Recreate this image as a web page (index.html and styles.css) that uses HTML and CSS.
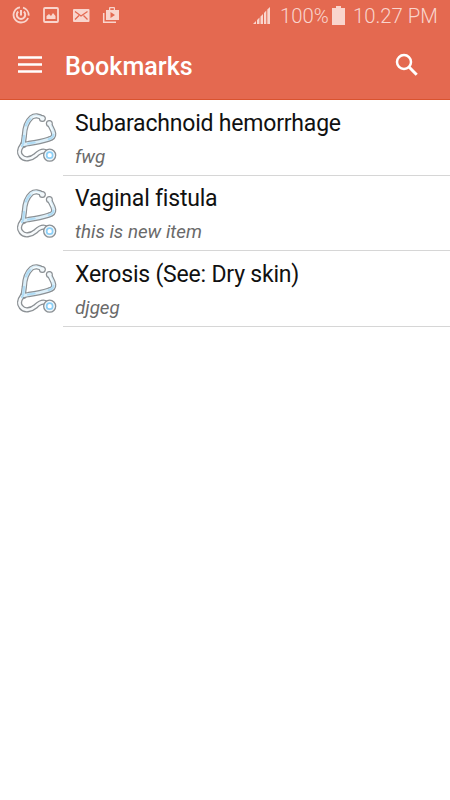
FILE: index.html
```html
<!DOCTYPE html>
<html lang="en">
<head>
<meta charset="utf-8">
<title>Bookmarks</title>
<link rel="stylesheet" href="styles.css">
</head>
<body>
<svg width="0" height="0" class="defs" aria-hidden="true">
  <symbol id="stethoscope" viewBox="24 15 132 159">
    <g fill="none" stroke-linecap="round" stroke-linejoin="round">
      <g stroke="#8b9094" stroke-width="16">
        <path d="M43 118C34 130 32 143 39 151C49 165 69 161 83 149C93 140 104 132 115 140"/>
        <path d="M104 39C94 29 79 29 70 36C54 50 50 68 49 91L46 113M124 54C128 64 136 75 137 84C138 95 132 98 122 101C104 107 84 111 62 114L48 117"/>
      </g>
      <g fill="#8b9094">
        <circle cx="103" cy="39" r="10.5"/>
        <circle cx="124" cy="54" r="10.5"/>
        <circle cx="46" cy="118" r="10"/>
      </g>
      <path stroke="#f7fafc" stroke-width="8" d="M43 118C34 130 32 143 39 151C49 165 69 161 83 149C93 140 104 132 115 140"/>
      <path stroke="#dceff9" stroke-width="9" d="M104 39C94 29 79 29 70 36C54 50 50 68 49 91L46 113M124 54C128 64 136 75 137 84C138 95 132 98 122 101C104 107 84 111 62 114L48 117"/>
      <path stroke="#b0dcf5" stroke-width="6.5" d="M54 60Q58 48 66 41M48 91L46 113L42 122M60 114L80 111M136 88Q136 97 122 101"/>
      <path stroke="#f8fcfd" stroke-width="4" d="M76 35Q87 29 98 37M125 59L132 74"/>
    </g>
    <g fill="#f2f8fb">
      <circle cx="103" cy="39" r="7"/>
      <circle cx="124" cy="54" r="7"/>
      <circle cx="125" cy="149" r="18" stroke="#8b9094" stroke-width="4"/>
    </g>
    <circle cx="125" cy="149" r="9" fill="#fff" stroke="#8bcff7" stroke-width="5"/>
  </symbol>
</svg>
<header class="header">
  <div class="status">
    <div class="notices">
      <svg class="notice" viewBox="0 0 18 18"><g fill="none" stroke="currentColor"><path stroke-width="1.8" d="M8 1.4A7.6 7.6 0 1 0 16.1 12M11 1.7A7.6 7.6 0 0 1 16.6 9.7"/><path stroke-width="2" d="M6.2 5.6A4.2 4.2 0 1 0 11.8 5.6M9 4V9.5"/></g></svg>
      <svg class="notice" viewBox="0 0 18 18"><rect x="2" y="2" width="14" height="14" rx="1" fill="none" stroke="currentColor" stroke-width="1.8"/><path fill="currentColor" d="M4.5 13V10L7 8L9 10L11 7L13.5 10V13Z"/></svg>
      <svg class="notice" viewBox="0 0 18 18"><rect x="1" y="3" width="16.5" height="13" rx="1" fill="currentColor"/><path d="M3 5.5L9 10L15.5 5.5M3 13.5L7 9.5M15.5 13.5L11.5 9.5" fill="none" stroke="#e46950" stroke-width="1.3"/></svg>
      <svg class="notice" viewBox="0 0 18 18"><path d="M1.7 7V16.2H14" fill="none" stroke="currentColor" stroke-width="1.5"/><path fill="currentColor" fill-rule="evenodd" d="M4 4H7V2Q7 1 8 1H12Q13 1 13 2V4H17V14H4ZM8.3 2.3V4H11.8V2.3ZM8.5 6V12L13 9Z"/></svg>
    </div>
    <svg class="signal" viewBox="0 0 18 18" fill="currentColor"><path d="M0 17L3 14V17ZM4 17V13L6.5 10.5V17ZM7.5 17V9.5L10 7V17ZM11 17V6L13.3 3.5V17ZM14.3 17V2.5L17 0V17Z"/></svg>
    <span class="level">100%</span>
    <svg class="battery" viewBox="0 0 13 19"><path fill="currentColor" d="M0 2H4V0H9V2H13V19H0Z"/></svg>
    <span class="clock">10.27 PM</span>
  </div>
  <div class="toolbar">
    <svg class="menu" viewBox="0 0 24 18"><path d="M0 1.5H24M0 8.5H24M0 15.5H24" stroke="#fff" stroke-width="2.5"/></svg>
    <h1 class="title">Bookmarks</h1>
    <svg class="search" viewBox="0 0 24 24"><circle cx="9" cy="9" r="7" fill="none" stroke="#fff" stroke-width="2.5"/><path d="M14 14L21.7 21.7" stroke="#fff" stroke-width="3"/></svg>
  </div>
</header>
<main class="list">
  <article class="row">
    <svg class="scope"><use href="#stethoscope"/></svg>
    <div class="text"><h2 class="name">Subarachnoid hemorrhage</h2><p class="note">fwg</p></div>
  </article>
  <article class="row">
    <svg class="scope"><use href="#stethoscope"/></svg>
    <div class="text"><h2 class="name">Vaginal fistula</h2><p class="note">this is new item</p></div>
  </article>
  <article class="row">
    <svg class="scope"><use href="#stethoscope"/></svg>
    <div class="text"><h2 class="name">Xerosis (See: Dry skin)</h2><p class="note">djgeg</p></div>
  </article>
</main>
</body>
</html>
```
FILE: styles.css
```css
* { box-sizing: border-box; }
body { margin: 0; background: #fff; font-family: Roboto, sans-serif; }
h1, h2, p { margin: 0; }
svg { display: block; flex: none; }
.defs { position: absolute; }
.header { height: 100px; background: #e46950; border-bottom: 1px solid #d9532f; color: #fff; }
.status { height: 31px; display: flex; align-items: center; padding: 0 12px; color: #f9d5cd; }
.notices { display: flex; gap: 12px; margin-right: auto; }
.notice { width: 18px; height: 18px; margin-top: -1px; }
.signal { width: 18px; height: 18px; margin-right: 9px; }
.level, .clock { font-size: 20.3px; font-weight: 300; line-height: 31px; white-space: nowrap; padding-top: 1px; }
.level { width: 49px; }
.battery { width: 13px; height: 19px; margin: 0 8px 1px 3px; }
.clock { width: 85px; }
.toolbar { height: 68px; display: flex; align-items: center; padding: 0 31px 0 18px; }
.menu { width: 24px; height: 18px; margin-right: 23px; }
.title { flex: 1; font-size: 25.1px; font-weight: 500; line-height: 34px; padding-top: 3px; }
.search { width: 24px; height: 24px; }
.row { height: 75.5px; display: flex; padding-left: 16px; }
.scope { width: 44px; height: 54px; margin: 10px 3px 0 0; }
.text { flex: 1; border-bottom: 1px solid #d6d6d6; padding-left: 12px; }
.name { font-size: 23px; letter-spacing: -0.2px; font-weight: 400; line-height: 30px; padding-top: 8.9px; color: #111; white-space: nowrap; }
.note { font-size: 18.8px; font-weight: 400; font-style: italic; line-height: 24px; margin-top: 6.1px; color: #6a6a6a; }
```
